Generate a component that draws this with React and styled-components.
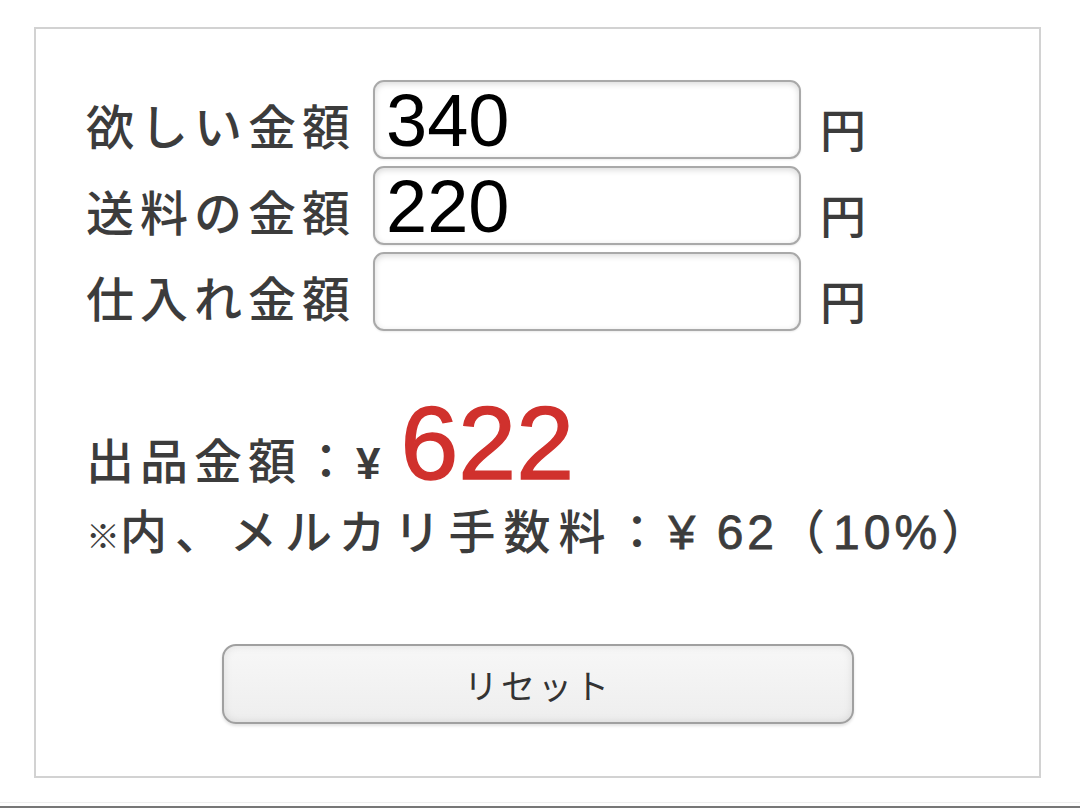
import styled, { createGlobalStyle } from "styled-components";

const GlobalStyle = createGlobalStyle`
  html, body {
    margin: 0;
    padding: 0;
    background: #ffffff;
  }
  body {
    font-family: "Liberation Sans", "Noto Sans CJK JP", sans-serif;
    color: #3c3c3c;
  }
`;

const rows = [
  { label: "欲しい金額", value: "340" },
  { label: "送料の金額", value: "220" },
  { label: "仕入れ金額", value: "" },
];

const App = () => {
  return (
    <Page>
      <GlobalStyle />
      <Card>
        <Form>
          {rows.map((row) => (
            <Row key={row.label}>
              <Label>{row.label}</Label>
              <Input type="text" defaultValue={row.value} />
              <Unit>円</Unit>
            </Row>
          ))}
        </Form>
        <Result>
          <PriceLine>
            出品金額：<Yen>¥</Yen>
            <Price>622</Price>
          </PriceLine>
          <FeeLine>
            <Mark>※</Mark>内、メルカリ手数料：<Num>¥ 62</Num>（<Num>10%</Num>）
          </FeeLine>
        </Result>
        <ButtonRow>
          <ResetButton type="button">リセット</ResetButton>
        </ButtonRow>
      </Card>
      <Footer />
    </Page>
  );
};

const Page = styled.div`
  width: 1080px;
  height: 808px;
  padding: 27px 0 0 34px;
  box-sizing: border-box;
  display: flex;
  flex-direction: column;
`;

const Card = styled.div`
  width: 1007px;
  height: 751px;
  box-sizing: border-box;
  border: 2px solid #d2d2d2;
  padding: 51px 0 0 50px;
  display: flex;
  flex-direction: column;
`;

const Form = styled.div`
  display: flex;
  flex-direction: column;
  gap: 7px;
`;

const Row = styled.div`
  display: flex;
  align-items: center;
  height: 79px;
`;

const Label = styled.span`
  width: 287px;
  font-family: "Noto Sans CJK JP", sans-serif;
  font-size: 48px;
  font-weight: 500;
  letter-spacing: 6px;
  color: #3c3c3c;
  line-height: 1;
  padding-top: 8px;
  white-space: nowrap;
`;

const Input = styled.input`
  width: 428px;
  height: 79px;
  box-sizing: border-box;
  border: 2px solid #a9a9a9;
  border-radius: 11px;
  background: #ffffff;
  box-shadow: inset 0 2px 6px rgba(0, 0, 0, 0.15), 0 1px 2px rgba(0, 0, 0, 0.08);
  padding: 2px 0 0 11px;
  font-family: "Liberation Sans", "Helvetica", sans-serif;
  font-size: 74px;
  color: #000000;
  outline: none;
`;

const Unit = styled.span`
  margin-left: 19px;
  font-family: "Noto Sans CJK JP", sans-serif;
  font-size: 46px;
  font-weight: 500;
  color: #3c3c3c;
  line-height: 1;
  padding-top: 14px;
`;

const Result = styled.div`
  margin-top: 72px;
  display: flex;
  flex-direction: column;
`;

const PriceLine = styled.div`
  display: flex;
  align-items: baseline;
  font-family: "Noto Sans CJK JP", sans-serif;
  font-size: 48px;
  font-weight: 500;
  letter-spacing: 6px;
  line-height: 80px;
  height: 80px;
  color: #3c3c3c;
`;

const Yen = styled.span`
  font-family: "Liberation Sans", sans-serif;
  font-weight: 700;
  font-size: 44px;
  letter-spacing: 0;
`;

const Price = styled.span`
  margin-left: 20px;
  font-family: "Liberation Sans", sans-serif;
  font-size: 104px;
  font-weight: 400;
  -webkit-text-stroke: 1.5px #d0312d;
  letter-spacing: 0;
  color: #d0312d;
`;

const FeeLine = styled.div`
  margin-top: 16px;
  font-family: "Noto Sans CJK JP", sans-serif;
  font-size: 47px;
  font-weight: 500;
  letter-spacing: 8px;
  line-height: 60px;
  color: #3c3c3c;
  white-space: nowrap;
`;

const Num = styled.span`
  font-family: "Liberation Sans", sans-serif;
  font-size: 48px;
  letter-spacing: 4px;
  -webkit-text-stroke: 0.8px #3c3c3c;
`;

const Mark = styled.span`
  font-size: 34px;
  font-weight: 700;
  letter-spacing: 0;
`;

const ButtonRow = styled.div`
  margin-top: 79px;
  padding-left: 136px;
  display: flex;
`;

const ResetButton = styled.button`
  width: 632px;
  height: 80px;
  box-sizing: border-box;
  border: 2px solid #a0a0a0;
  border-radius: 14px;
  background: linear-gradient(#f7f7f7, #eeeeee);
  box-shadow: inset 0 0 8px rgba(0, 0, 0, 0.1), 0 2px 3px rgba(0, 0, 0, 0.12);
  font-family: "Noto Sans CJK JP", sans-serif;
  font-size: 34px;
  letter-spacing: 3px;
  color: #333333;
  cursor: pointer;
`;

const Footer = styled.div`
  margin-top: auto;
  margin-left: -34px;
  height: 3px;
  border-top: 1px solid #eeeeee;
  border-bottom: 2px solid #777777;
`;

export default App;
